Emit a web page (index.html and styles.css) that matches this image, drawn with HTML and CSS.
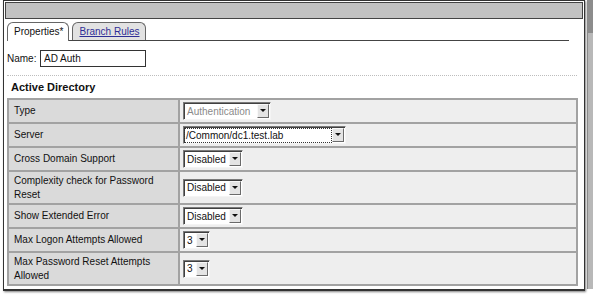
FILE: index.html
```html
<!DOCTYPE html>
<html lang="en">
<head>
    <meta charset="UTF-8">
    <meta name="viewport" content="width=device-width, initial-scale=1.0">
    <title>AD Auth - Properties</title>
    <link rel="stylesheet" href="styles.css">
</head>
<body>
    <div class="page">
        <div class="dialog">
            <div class="titlebar"></div>

            <div class="content">
                <div class="tabs">
                    <div class="tab active">Properties*</div>
                    <div class="tab"><a href="#">Branch Rules</a></div>
                </div>

                <div class="name-row">
                    <label for="name">Name:</label>
                    <input type="text" id="name" value="AD Auth">
                </div>

                <div class="divider"></div>

                <h3 class="section-title">Active Directory</h3>

                <table class="props">
                    <tr>
                        <td class="label">Type</td>
                        <td class="value">
                            <span class="sel sel-type disabled"><span class="val">Authentication</span><span class="btn"></span></span>
                        </td>
                    </tr>
                    <tr>
                        <td class="label">Server</td>
                        <td class="value">
                            <span class="sel sel-server"><span class="val focus">/Common/dc1.test.lab</span><span class="btn"></span></span>
                        </td>
                    </tr>
                    <tr>
                        <td class="label">Cross Domain Support</td>
                        <td class="value">
                            <span class="sel sel-short"><span class="val">Disabled</span><span class="btn"></span></span>
                        </td>
                    </tr>
                    <tr>
                        <td class="label">Complexity check for Password Reset</td>
                        <td class="value">
                            <span class="sel sel-short"><span class="val">Disabled</span><span class="btn"></span></span>
                        </td>
                    </tr>
                    <tr>
                        <td class="label">Show Extended Error</td>
                        <td class="value">
                            <span class="sel sel-short"><span class="val">Disabled</span><span class="btn"></span></span>
                        </td>
                    </tr>
                    <tr>
                        <td class="label">Max Logon Attempts Allowed</td>
                        <td class="value">
                            <span class="sel sel-num"><span class="val">3</span><span class="btn"></span></span>
                        </td>
                    </tr>
                    <tr>
                        <td class="label">Max Password Reset Attempts Allowed</td>
                        <td class="value">
                            <span class="sel sel-num"><span class="val">3</span><span class="btn"></span></span>
                        </td>
                    </tr>
                </table>
            </div>
        </div>

        <div class="scrollbar"><div class="thumb"></div></div>
    </div>
</body>
</html>
```

FILE: styles.css
```css
body {
    font-family: "Liberation Sans", Arial, sans-serif;
    font-size: 10px;
    color: #111;
    margin: 0;
    padding: 0;
    background-color: #fff;
    overflow: hidden;
}

/* Page frame */
.page {
    display: flex;
    align-items: flex-start;
    height: 296px;
    padding-left: 3px;
}

.dialog {
    width: 581px;
    height: 288px;
    border: 1px solid #333;
    border-bottom-width: 2px;
    background-color: #fff;
    box-shadow: 1px 1px 2px rgba(0, 0, 0, 0.5);
    overflow: hidden;
}

.titlebar {
    height: 15px;
    margin: 1px 1px 0 1px;
    border: 1px solid #444;
    background-color: #c2c2c2;
}

.scrollbar {
    width: 5px;
    height: 289px;
    margin-left: 2px;
    border-left: 1px solid #8a8a8a;
    background-color: #b8b8b8;
}

.scrollbar .thumb {
    height: 33px;
    background-color: #8c8c8c;
}

/* Content */
.content {
    padding-left: 3px;
}

.tabs {
    display: flex;
    align-items: flex-end;
    width: 562px;
    margin-top: 3px;
    border-bottom: 1px solid #444;
}

.tab {
    height: 17px;
    line-height: 18px;
    padding: 0 5px 0 6px;
    border: 1px solid #666;
    border-bottom: none;
    border-radius: 6px 6px 0 0;
    background-color: #e2e2e2;
    margin-left: 3px;
}

.tab.active {
    margin-left: 0;
    background-color: #fff;
    height: 18px;
    margin-bottom: -1px;
}

.tab a {
    color: #2e2e96;
}

.name-row {
    display: flex;
    align-items: center;
    margin-top: 9px;
}

.name-row label {
    width: 33px;
}

.name-row input {
    box-sizing: border-box;
    width: 106px;
    height: 17px;
    padding: 0 3px;
    border: 1px solid #333;
    font-family: "Liberation Sans", Arial, sans-serif;
    font-size: 10px;
    color: #111;
}

.divider {
    width: 570px;
    margin-top: 8px;
    border-top: 1px dotted #bdbdbd;
}

.section-title {
    margin: 4px 0 4px 4px;
    font-size: 11px;
    line-height: 14px;
}

/* Properties table */
.props {
    width: 571px;
    border-collapse: collapse;
    border: 2px solid #a2a2a2;
}

.props td {
    border: 2px solid #a2a2a2;
    padding: 2px 6px 2px 5px;
    line-height: 13.5px;
    vertical-align: middle;
}

.props td.label {
    width: 158px;
    background-color: #dadada;
}

.props td.value {
    padding-left: 3px;
    background-color: #eeeeee;
}

/* Fake dropdowns */
.sel {
    display: inline-flex;
    align-items: center;
    box-sizing: border-box;
    height: 18px;
    vertical-align: middle;
    border: 1px solid;
    border-color: #7a7a7a #f4f4f4 #f4f4f4 #7a7a7a;
    box-shadow: inset 1px 1px 0 #404040;
    background-color: #fff;
}

.sel .val {
    flex: 1;
    padding: 0 2px 0 3px;
    line-height: 13px;
    white-space: nowrap;
}

.sel .val.focus {
    margin-left: 1px;
    padding-left: 1px;
    outline: 1px dotted #333;
}

.sel.disabled .val {
    color: #8a8a8a;
}

.sel .btn {
    position: relative;
    box-sizing: border-box;
    width: 12px;
    height: 14px;
    margin: 0 1px 0 1px;
    border: 1px solid;
    border-color: #f8f8f8 #6a6a6a #6a6a6a #f8f8f8;
    background-color: #e4e4e4;
}

.sel .btn::after {
    content: "";
    position: absolute;
    left: 2px;
    top: 4px;
    border-left: 3px solid transparent;
    border-right: 3px solid transparent;
    border-top: 3px solid #111;
}

.sel-type {
    width: 88px;
}

.sel-server {
    width: 163px;
}

.sel-short {
    width: 60px;
}

.sel-num {
    width: 27px;
}
```
